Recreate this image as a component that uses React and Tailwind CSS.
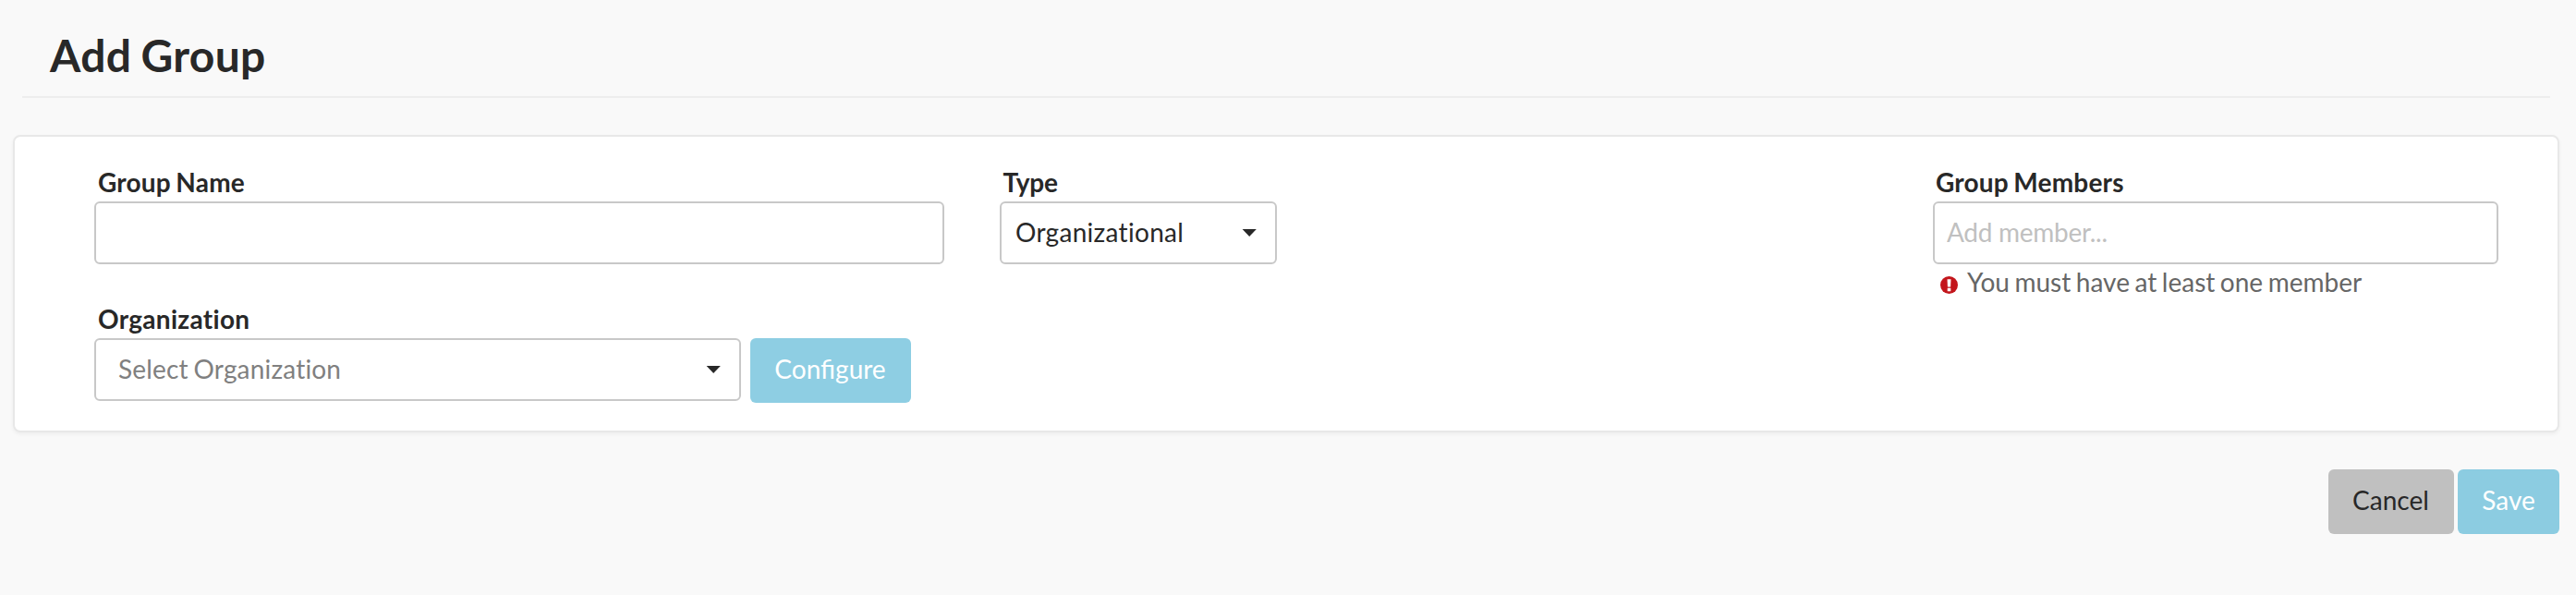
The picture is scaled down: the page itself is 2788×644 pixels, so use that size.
import React from 'react';

const fieldBox = 'h-[68px] rounded-[6px] border-2 border-[#c8c8c8] bg-white';

function Label({ className = 'pl-1 tracking-[0.2px]', children }) {
  return <label className={`mb-1 block h-[34px] leading-[34px] font-bold ${className}`}>{children}</label>;
}

function Caret() {
  return (
    <svg className="h-2 w-4" viewBox="0 0 16 8" fill="#282828">
      <path d="M0.6 0H15.8L8.2 8Z" />
    </svg>
  );
}

function ErrorIcon() {
  return (
    <svg className="mt-[11px] h-[19px] w-[19px] shrink-0" viewBox="0 0 19 19">
      <circle cx="9.5" cy="9.5" r="9.5" fill="#c3161c" />
      <path d="M7.5 3.2H11.5L11.1 11.6H7.9Z" fill="#fff" />
      <rect x="7.7" y="12.8" width="3.6" height="3.4" rx="0.3" fill="#fff" />
    </svg>
  );
}

function Button({ className, children }) {
  return (
    <button type="button" className={`h-[70px] rounded-[6px] pb-1 text-center leading-[34px] ${className}`}>
      {children}
    </button>
  );
}

export default function App() {
  return (
    <div className="h-[644px] w-[2788px] overflow-hidden bg-[#f9f9f9] font-['Lato',sans-serif] text-[28px] leading-[34px] text-[#282828] [word-spacing:-1.6px]">
      <header className="mr-[28px] ml-[24px] h-[106px] border-b-2 border-[#ededed] pt-[31px] pl-[30px]">
        <h1 className="text-[48px] leading-[58px] font-bold tracking-[0.3px]">Add Group</h1>
      </header>

      <main className="mt-10 mr-[18px] ml-[14px]">
        <section className="flex h-[322px] items-start rounded-[8px] border-2 border-[#e8e8e8] bg-white pt-8 pr-16 pl-[86px] shadow-[0_2px_4px_rgba(0,0,0,0.05)]">
          <div className="w-[920px]">
            <Label>Group Name</Label>
            <input className={`block w-full px-3 outline-none ${fieldBox}`} />
            <div className="mt-[42px]">
              <Label className="pl-1 tracking-[0.3px]">Organization</Label>
              <div className="flex gap-[10px]">
                <div className={`flex w-[700px] items-center justify-between pr-5 pl-6 text-[#808080] ${fieldBox}`}>
                  <span className="pb-[2px] tracking-[0.18px]">Select Organization</span>
                  <Caret />
                </div>
                <Button className="w-[174px] bg-[#8ecee3] pr-px text-white">Configure</Button>
              </div>
            </div>
          </div>

          <div className="ml-[60px] w-[300px]">
            <Label className="pl-[3.5px] tracking-[-0.2px]">Type</Label>
            <div className={`flex items-center justify-between pr-5 pl-[15px] ${fieldBox}`}>
              <span className="pb-[2px] tracking-[0.3px]">Organizational</span>
              <Caret />
            </div>
          </div>

          <div className="ml-auto w-[612px]">
            <Label className="pl-[3px] tracking-[0.2px]">Group Members</Label>
            <input
              className={`block w-full px-[13px] pb-[3px] tracking-[-0.28px] outline-none placeholder:text-[#c0c0c0] ${fieldBox}`}
              placeholder="Add member..."
            />
            <div className="mt-[2px] flex items-start gap-[10px] pl-2 text-[#666666]">
              <ErrorIcon />
              <span>You must have at least one member</span>
            </div>
          </div>
        </section>

        <div className="mt-10 flex justify-end gap-1">
          <Button className="w-[136px] bg-[#c0c0c0] pr-px">Cancel</Button>
          <Button className="w-[110px] bg-[#8ccce1] text-white">Save</Button>
        </div>
      </main>
    </div>
  );
}
